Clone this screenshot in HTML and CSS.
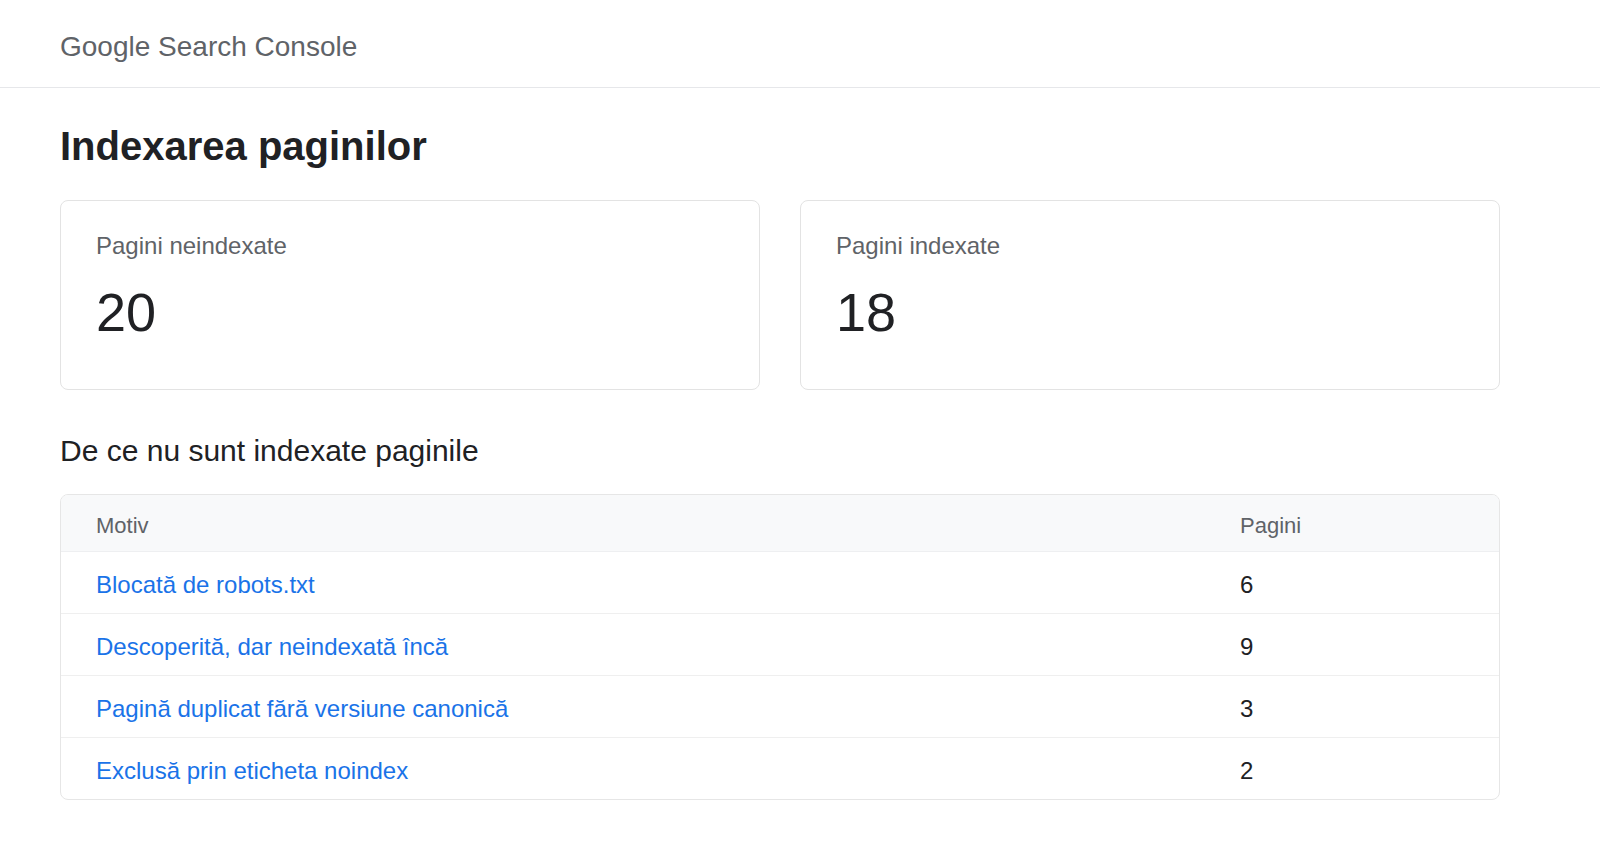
FILE: index.html
```html
<!DOCTYPE html>
<html lang="ro">
<head>
<meta charset="utf-8">
<title>Indexarea paginilor - Google Search Console</title>
<link rel="stylesheet" href="styles.css">
</head>
<body>
<header class="topbar">
  <span class="brand">Google Search Console</span>
</header>
<main class="content">
  <h1 class="title">Indexarea paginilor</h1>
  <section class="stats">
    <div class="card">
      <div class="card-label">Pagini neindexate</div>
      <div class="card-value">20</div>
    </div>
    <div class="card">
      <div class="card-label">Pagini indexate</div>
      <div class="card-value">18</div>
    </div>
  </section>
  <h2 class="subtitle">De ce nu sunt indexate paginile</h2>
  <div class="table">
    <div class="row head">
      <div class="cell">Motiv</div>
      <div class="cell">Pagini</div>
    </div>
    <div class="row">
      <div class="cell"><a class="link" href="#">Blocată de robots.txt</a></div>
      <div class="cell num">6</div>
    </div>
    <div class="row">
      <div class="cell"><a class="link" href="#">Descoperită, dar neindexată încă</a></div>
      <div class="cell num">9</div>
    </div>
    <div class="row">
      <div class="cell"><a class="link" href="#">Pagină duplicat fără versiune canonică</a></div>
      <div class="cell num">3</div>
    </div>
    <div class="row">
      <div class="cell"><a class="link" href="#">Exclusă prin eticheta noindex</a></div>
      <div class="cell num">2</div>
    </div>
  </div>
</main>
</body>
</html>
```

FILE: styles.css
```css
* { box-sizing: border-box; }

body {
  margin: 0;
  background: #ffffff;
  font-family: "Liberation Sans", Arial, Helvetica, sans-serif;
  color: #202124;
}

.topbar {
  height: 88px;
  padding: 31px 60px 0;
  border-bottom: 1px solid #e6e7ea;
}

.brand {
  display: block;
  font-size: 28px;
  line-height: 32px;
  color: #5f6368;
}

.content {
  padding: 0 60px 40px;
  width: 1560px;
}

.title {
  margin: 34px 0 30px;
  font-size: 40px;
  line-height: 48px;
  font-weight: 700;
  color: #202124;
}

.stats {
  display: grid;
  grid-template-columns: 1fr 1fr;
  gap: 40px;
}

.card {
  height: 190px;
  border: 1px solid #e3e3e3;
  border-radius: 8px;
  padding: 31px 35px 0;
}

.card-label {
  font-size: 24px;
  line-height: 28px;
  color: #5f6368;
}

.card-value {
  margin-top: 20px;
  font-size: 54px;
  line-height: 64px;
  color: #202124;
}

.subtitle {
  margin: 44px 0 26px;
  font-size: 30px;
  line-height: 34px;
  font-weight: 400;
  color: #202124;
}

.table {
  border: 1px solid #e6e6e6;
  border-radius: 8px;
  overflow: hidden;
}

.row {
  display: grid;
  grid-template-columns: 1fr 294px;
  border-top: 1px solid #efefef;
  padding: 19px 0 14px;
  font-size: 24px;
  line-height: 28px;
}

.row.head {
  border-top: 0;
  background: #f8f9fa;
  padding: 18px 0 12px;
  font-size: 22px;
  line-height: 26px;
  color: #5f6368;
  border-bottom: 1px solid #eeeff1;
}

.row.head + .row { border-top: 0; }

.cell {
  padding: 0 35px;
}

.link {
  color: #1a73e8;
  text-decoration: none;
}

.num {
  color: #202124;
}
```
